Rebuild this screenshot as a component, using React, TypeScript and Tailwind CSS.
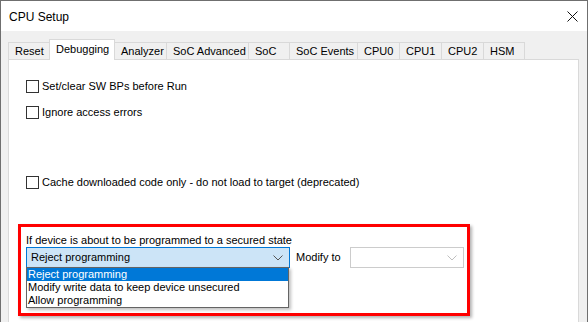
import React from 'react';

const tabs = [
  { label: 'Reset', w: 'w-[42px]' },
  { label: 'Debugging', w: 'w-[66px]', active: true },
  { label: 'Analyzer', w: 'w-[53px]' },
  { label: 'SoC Advanced', w: 'w-[83px]' },
  { label: 'SoC', w: 'w-[42px]' },
  { label: 'SoC Events', w: 'w-[69px]' },
  { label: 'CPU0', w: 'w-[43px]' },
  { label: 'CPU1', w: 'w-[43px]' },
  { label: 'CPU2', w: 'w-[43px]' },
  { label: 'HSM', w: 'w-[42px]' },
];

function Chevron({ color }: { color: string }) {
  return (
    <svg width="10" height="6" viewBox="0 0 10 6" fill="none">
      <path d="M0.5 0.5 L5 5 L9.5 0.5" stroke={color} strokeWidth="1" />
    </svg>
  );
}

function CheckRow({ label, className }: { label: string; className?: string }) {
  return (
    <div className={`flex h-[13px] items-center ${className ?? ''}`}>
      <div className="h-[13px] w-[13px] shrink-0 border border-[#333333] bg-white" />
      <span className="ml-[3px] whitespace-nowrap leading-[13px]">{label}</span>
    </div>
  );
}

export default function App() {
  return (
    <div
      className="h-[322px] w-[588px] overflow-hidden border-x border-t border-[#6f6f6f] bg-[#f0f0f0] text-[11px] text-black"
      style={{ fontFamily: '"Segoe UI", "Liberation Sans", sans-serif' }}
    >
      {/* title bar */}
      <div className="flex h-[30px] items-center justify-between bg-white pl-[8px] pr-[9px]">
        <span className="pt-[1px] text-[12px]">CPU Setup</span>
        <svg width="11" height="11" viewBox="0 0 11 11">
          <path d="M0.5 0.5 L10.5 10.5 M10.5 0.5 L0.5 10.5" stroke="#111" strokeWidth="1" />
        </svg>
      </div>

      <div className="pl-[7px] pr-[8px]">
        {/* tabs */}
        <div className="relative z-10 -mb-px mt-[8px] flex h-[21px] items-end">
          {tabs.map((t, i) => (
            <div
              key={t.label}
              className={`${t.w} ${i > 0 ? '-ml-px' : ''} flex items-center whitespace-nowrap border border-[#d9d9d9] pl-[6px] ${
                t.active ? 'relative z-10 h-[21px] border-b-0 bg-white pb-[2px]' : 'h-[18px] bg-[#f0f0f0]'
              }`}
            >
              {t.label}
            </div>
          ))}
        </div>

        {/* tab panel */}
        <div className="h-[300px] w-[571px] border border-[#d9d9d9] bg-white pl-[17px] pt-[20px]">
          <CheckRow label="Set/clear SW BPs before Run" />
          <CheckRow label="Ignore access errors" className="mt-[13px]" />
          <CheckRow label="Cache downloaded code only - do not load to target (deprecated)" className="mt-[57px]" />

          {/* highlighted group */}
          <div className="-ml-[8px] mt-[35px] h-[92px] w-[452px] border-[3px] border-[#ff0000] pl-[5px] pt-[6px] shadow-[2px_2px_3px_rgba(0,0,0,0.3)]">
            <div className="h-[15px] whitespace-nowrap leading-[15px]">
              If device is about to be programmed to a secured state
            </div>
            <div className="mt-[-1px] flex items-center">
              <div className="relative">
                <div className="flex h-[21px] w-[264px] items-center justify-between border border-[#0078d7] bg-[#cce4f7] pl-[4px] pr-[6px]">
                  <span>Reject programming</span>
                  <Chevron color="#555555" />
                </div>
                {/* open list */}
                <div className="absolute left-0 top-[20px] w-[263px] border border-[#646464] bg-white shadow-[2px_2px_3px_rgba(0,0,0,0.25)]">
                  <div className="h-[13px] overflow-hidden bg-[#0078d7] pl-[1px] leading-[13px] text-white">Reject programming</div>
                  <div className="h-[13px] overflow-hidden pl-[1px] leading-[13px]">Modify write data to keep device unsecured</div>
                  <div className="h-[13px] overflow-hidden pl-[1px] leading-[13px]">Allow programming</div>
                </div>
              </div>
              <span className="ml-[6px] w-[54px] whitespace-nowrap">Modify to</span>
              <div className="flex h-[21px] w-[114px] items-center justify-end border border-[#cccccc] bg-white pr-[6px]">
                <Chevron color="#bfbfbf" />
              </div>
            </div>
          </div>
        </div>
      </div>
    </div>
  );
}
